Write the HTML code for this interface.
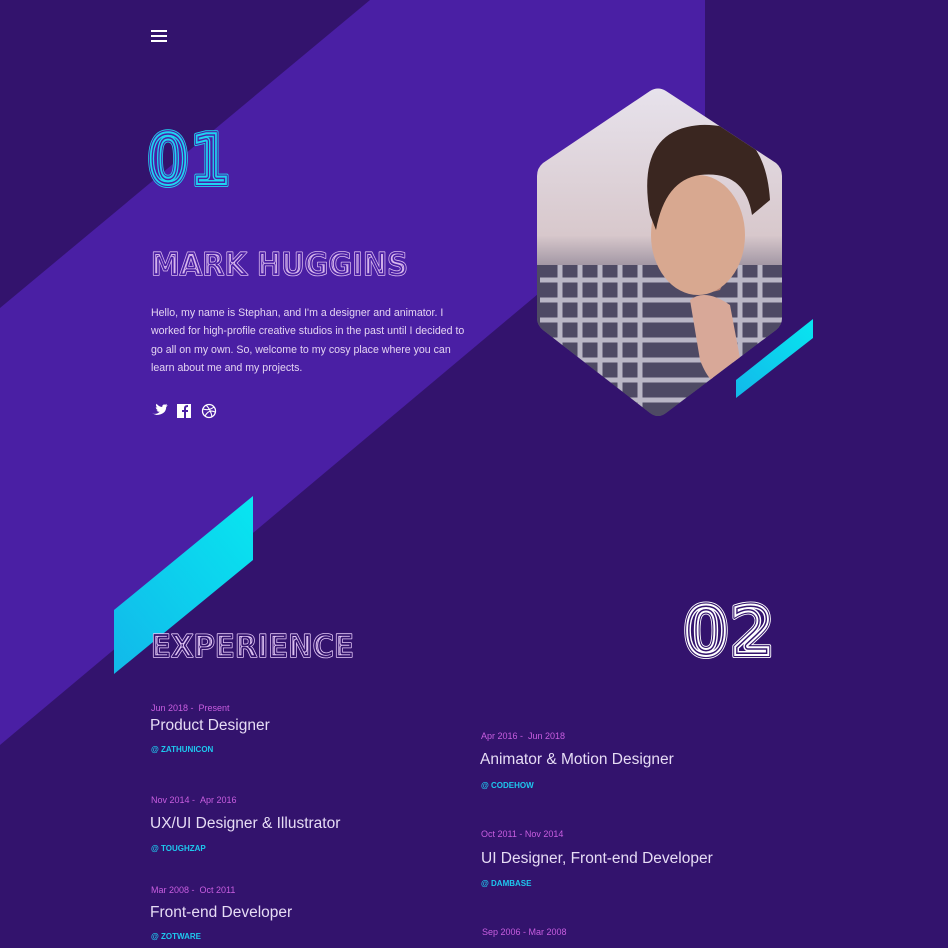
<!DOCTYPE html>
<html><head><meta charset="utf-8"><style>
*{margin:0;padding:0;box-sizing:border-box}
body{width:948px;height:948px;overflow:hidden;background:#33136d;font-family:"Liberation Sans",sans-serif;position:relative}
.abs{position:absolute}
.date{font-size:9px;color:#c85ee0}
.title{font-size:15.5px;color:#e6dcf5}
.co{font-size:8px;color:#1ec8ee;font-weight:bold}
svg text{font-family:"DejaVu Sans","Liberation Sans",sans-serif;font-weight:bold}
</style></head><body>
<svg class="abs" style="left:0;top:0" width="948" height="948">
<polygon points="0,308 370,0 705,0 705,154 0,745" fill="#4a1fa4"/>
<defs>
<linearGradient id="cy" x1="0" y1="1" x2="1" y2="0"><stop offset="0" stop-color="#12b8ea"/><stop offset="1" stop-color="#08e6f0"/></linearGradient>
<linearGradient id="ph" x1="0" y1="0" x2="0" y2="1"><stop offset="0" stop-color="#e8e4ee"/><stop offset="0.45" stop-color="#d8c8cc"/><stop offset="0.6" stop-color="#7c7488"/><stop offset="1" stop-color="#5a5870"/></linearGradient>
<clipPath id="hx"><path d="M650,91 Q658,86 666,91 L776,163 Q782,168 782,176 L782,318 Q782,325 776,330 L666,413 Q658,419 650,413 L543,330 Q537,325 537,318 L537,176 Q537,168 543,163 Z"/></clipPath>
</defs>
<g clip-path="url(#hx)">
<rect x="530" y="80" width="260" height="345" fill="url(#ph)"/>
<rect x="537" y="265" width="250" height="160" fill="#4e4a64"/>
<g stroke="#e8e6f0" stroke-width="5" opacity="0.7">
<line x1="540" y1="280" x2="790" y2="280"/><line x1="540" y1="300" x2="790" y2="300"/><line x1="540" y1="320" x2="790" y2="320"/><line x1="540" y1="340" x2="790" y2="340"/><line x1="540" y1="360" x2="790" y2="360"/><line x1="540" y1="380" x2="790" y2="380"/><line x1="540" y1="400" x2="790" y2="400"/>
<line x1="560" y1="265" x2="560" y2="420"/><line x1="580" y1="265" x2="580" y2="420"/><line x1="600" y1="265" x2="600" y2="420"/><line x1="620" y1="265" x2="620" y2="420"/><line x1="640" y1="265" x2="640" y2="420"/><line x1="740" y1="265" x2="740" y2="420"/><line x1="760" y1="265" x2="760" y2="420"/>
</g>
<path d="M668,260 Q690,300 720,290 L730,270 Z" fill="#b88070"/>
<ellipse cx="698" cy="235" rx="47" ry="60" fill="#d8a890"/>
<path d="M650,215 Q635,130 700,125 Q765,122 770,200 L752,215 Q745,170 700,175 Q665,180 656,230 Z" fill="#3a2620"/>
<path d="M690,300 Q705,288 730,305 L745,385 Q715,400 700,360 Z" fill="#d8a898"/>
</g>
<polygon points="813,319 813,338 736,398 736,380" fill="url(#cy)"/>
<polygon points="253,496 253,560 114,674 114,610" fill="url(#cy)"/>
<!-- 01 -->
<g font-size="72" stroke-linejoin="round">
<text x="147" y="185" textLength="84" lengthAdjust="spacingAndGlyphs" fill="#1ed4f2" stroke="#1ed4f2" stroke-width="3">01</text>
<text x="147" y="185" textLength="84" lengthAdjust="spacingAndGlyphs" fill="#4a1fa4" stroke="#4a1fa4" stroke-width="1.5">01</text>
</g>
<g font-size="72" fill="none" stroke-linejoin="round">
<text x="147" y="185" textLength="84" lengthAdjust="spacingAndGlyphs" stroke="#1ed4f2" stroke-width="0" fill="none">01</text>
</g>
</svg>
<svg class="abs" style="left:0;top:0" width="948" height="948">
<defs>
<clipPath id="c1"><text x="147" y="185" font-size="72" textLength="84" lengthAdjust="spacingAndGlyphs">01</text></clipPath>
</defs>
<!-- concentric outlines using strokes -->
<g font-size="72" stroke-linejoin="round">
<text x="147" y="185" textLength="84" lengthAdjust="spacingAndGlyphs" fill="#4a1fa4" stroke="#1ed4f2" stroke-width="4">01</text>
<text x="147" y="185" textLength="84" lengthAdjust="spacingAndGlyphs" fill="none" stroke="#4a1fa4" stroke-width="2.2">01</text>
</g>
<g clip-path="url(#c1)" fill="none" stroke-linejoin="round" font-size="72">
<text x="147" y="185" textLength="84" lengthAdjust="spacingAndGlyphs" stroke="#1ed4f2" stroke-width="10">01</text>
<text x="147" y="185" textLength="84" lengthAdjust="spacingAndGlyphs" stroke="#4a1fa4" stroke-width="7">01</text>
<text x="147" y="185" textLength="84" lengthAdjust="spacingAndGlyphs" stroke="#1ed4f2" stroke-width="4">01</text>
</g>
<!-- 02 -->
<defs><clipPath id="c2"><text x="683" y="656" font-size="70" textLength="92" lengthAdjust="spacingAndGlyphs">02</text></clipPath></defs>
<g font-size="70" stroke-linejoin="round">
<text x="683" y="656" textLength="92" lengthAdjust="spacingAndGlyphs" fill="#33136d" stroke="#fff" stroke-width="4">02</text>
<text x="683" y="656" textLength="92" lengthAdjust="spacingAndGlyphs" fill="none" stroke="#33136d" stroke-width="2.2">02</text>
</g>
<g clip-path="url(#c2)" fill="none" stroke-linejoin="round" font-size="70">
<text x="683" y="656" textLength="92" lengthAdjust="spacingAndGlyphs" stroke="#fff" stroke-width="10">02</text>
<text x="683" y="656" textLength="92" lengthAdjust="spacingAndGlyphs" stroke="#33136d" stroke-width="7">02</text>
<text x="683" y="656" textLength="92" lengthAdjust="spacingAndGlyphs" stroke="#fff" stroke-width="4">02</text>
</g>
<!-- MARK HUGGINS -->
<g font-size="31" stroke-linejoin="round">
<text x="151" y="275" textLength="257" lengthAdjust="spacingAndGlyphs" fill="#4a1fa4" stroke="#d9b8ee" stroke-width="1.6">MARK HUGGINS</text>
<text x="151" y="275" textLength="257" lengthAdjust="spacingAndGlyphs" fill="none" stroke="#d9b8ee" stroke-width="0">MARK HUGGINS</text>
</g>
<defs><clipPath id="c3"><text x="151" y="275" font-size="31" textLength="257" lengthAdjust="spacingAndGlyphs">MARK HUGGINS</text></clipPath>
<clipPath id="c4"><text x="151" y="657" font-size="31" textLength="203" lengthAdjust="spacingAndGlyphs">EXPERIENCE</text></clipPath></defs>
<g clip-path="url(#c3)" fill="none" font-size="31" stroke-linejoin="round">
<text x="151" y="275" textLength="257" lengthAdjust="spacingAndGlyphs" stroke="#d9b8ee" stroke-width="5.5">MARK HUGGINS</text>
<text x="151" y="275" textLength="257" lengthAdjust="spacingAndGlyphs" stroke="#4a1fa4" stroke-width="3.5">MARK HUGGINS</text>
</g>
<g font-size="31" stroke-linejoin="round">
<text x="151" y="657" textLength="203" lengthAdjust="spacingAndGlyphs" fill="#33136d" stroke="#e0c4f4" stroke-width="1.6">EXPERIENCE</text>
</g>
<g clip-path="url(#c4)" fill="none" font-size="31" stroke-linejoin="round">
<text x="151" y="657" textLength="203" lengthAdjust="spacingAndGlyphs" stroke="#e0c4f4" stroke-width="5.5">EXPERIENCE</text>
<text x="151" y="657" textLength="203" lengthAdjust="spacingAndGlyphs" stroke="#33136d" stroke-width="3.5">EXPERIENCE</text>
</g>
</svg>
<div class="abs" style="left:151px;top:30px;width:16px">
<div style="height:2px;background:#fff;margin-bottom:3px"></div><div style="height:2px;background:#fff;margin-bottom:3px"></div><div style="height:2px;background:#fff"></div></div>
<div class="abs" style="left:151px;top:304px;width:322px;font-size:10.6px;line-height:18.3px;color:#e4d4f2">Hello, my name is Stephan, and I'm a designer and animator. I worked for high-profile creative studios in the past until I decided to go all on my own. So, welcome to my cosy place where you can learn about me and my projects.</div>
<div class="abs" style="left:151px;top:402px">
<svg width="70" height="18"><path d="M1,13 Q7,15 11,11 Q8,11 7,9 L9,9 Q6,8 6,5 L8,6 Q5,3 7,1 Q10,5 14,5 Q14,1 18,2 L20,1 L19,3 L21,3 L19,5 Q19,14 7,15 Z" fill="#fff" transform="translate(0,1) scale(0.8)"/><rect x="26" y="2" width="14" height="14" fill="#fff"/><path d="M35,16 L35,10 L37,10 L37,8 L35,8 L35,6 Q35,5 37,5 L37,3 Q33,3 33,6 L33,8 L31,8 L31,10 L33,10 L33,16Z" fill="#4a1fa4"/><circle cx="58" cy="9" r="6.5" fill="none" stroke="#fff" stroke-width="1.3"/><path d="M52,7 Q58,9 63,5 M54,14 Q58,7 64,10 M55,3 Q60,8 61,15" fill="none" stroke="#fff" stroke-width="1.1"/></svg></div>
<div class="abs date" style="left:151px;top:703px">Jun 2018 - &nbsp;Present</div>
<div class="abs title" style="left:150px;top:717px">Product Designer</div>
<div class="abs co" style="left:151px;top:745px">@ ZATHUNICON</div>
<div class="abs date" style="left:151px;top:795px">Nov 2014 - &nbsp;Apr 2016</div>
<div class="abs title" style="left:150px;top:815px">UX/UI Designer &amp; Illustrator</div>
<div class="abs co" style="left:151px;top:844px">@ TOUGHZAP</div>
<div class="abs date" style="left:151px;top:885px">Mar 2008 - &nbsp;Oct 2011</div>
<div class="abs title" style="left:150px;top:904px">Front-end Developer</div>
<div class="abs co" style="left:151px;top:932px">@ ZOTWARE</div>
<div class="abs date" style="left:481px;top:731px">Apr 2016 - &nbsp;Jun 2018</div>
<div class="abs title" style="left:480px;top:751px">Animator &amp; Motion Designer</div>
<div class="abs co" style="left:481px;top:781px">@ CODEHOW</div>
<div class="abs date" style="left:481px;top:829px">Oct 2011 - Nov 2014</div>
<div class="abs title" style="left:481px;top:850px">UI Designer, Front-end Developer</div>
<div class="abs co" style="left:481px;top:879px">@ DAMBASE</div>
<div class="abs date" style="left:482px;top:927px">Sep 2006 - Mar 2008</div>
</body></html>
